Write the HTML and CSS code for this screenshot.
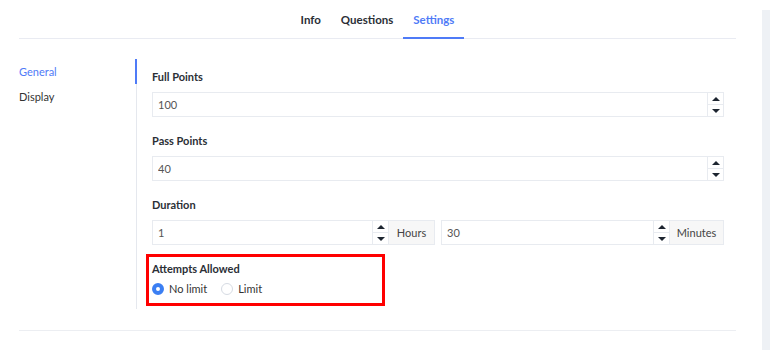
FILE: index.html
```html
<!DOCTYPE html>
<html lang="en">
<head>
  <meta charset="UTF-8" />
  <meta name="viewport" content="width=device-width, initial-scale=1.0"/>
  <title>Quiz Settings</title>
  <link rel="stylesheet" href="styles.css">
</head>
<body>
  <div class="page">
    <div class="main">
      <div class="tabs">
        <a class="tab">Info</a>
        <a class="tab">Questions</a>
        <a class="tab active">Settings</a>
      </div>

      <div class="settings">
        <div class="side-nav">
          <a class="nav-item active">General</a>
          <a class="nav-item">Display</a>
        </div>

        <div class="content">
          <div class="field">
            <label>Full Points</label>
            <div class="input-group">
              <div class="number-input">
                <input type="text" value="100" />
                <div class="spinner">
                  <span class="up"></span>
                  <span class="down"></span>
                </div>
              </div>
            </div>
          </div>

          <div class="field">
            <label>Pass Points</label>
            <div class="input-group">
              <div class="number-input">
                <input type="text" value="40" />
                <div class="spinner">
                  <span class="up"></span>
                  <span class="down"></span>
                </div>
              </div>
            </div>
          </div>

          <div class="field field-duration">
            <label>Duration</label>
            <div class="duration">
              <div class="input-group">
                <div class="number-input">
                  <input type="text" value="1" />
                  <div class="spinner">
                    <span class="up"></span>
                    <span class="down"></span>
                  </div>
                </div>
                <span class="addon addon-hours">Hours</span>
              </div>
              <div class="input-group">
                <div class="number-input">
                  <input type="text" value="30" />
                  <div class="spinner">
                    <span class="up"></span>
                    <span class="down"></span>
                  </div>
                </div>
                <span class="addon addon-minutes">Minutes</span>
              </div>
            </div>
          </div>

          <div class="field highlight">
            <label>Attempts Allowed</label>
            <div class="radios">
              <span class="radio checked">No limit</span>
              <span class="radio">Limit</span>
            </div>
          </div>
        </div>
      </div>

      <div class="footer-line"></div>
    </div>
    <div class="scroll-strip"></div>
  </div>
</body>
</html>
```

FILE: styles.css
```css
body {
  margin: 0;
  font-family: Lato, "Open Sans", sans-serif;
  font-size: 11px;
  color: #333;
  background: white;
}
.page {
  display: flex;
  align-items: flex-start;
}
.main {
  width: 717px;
  padding: 0 0 0 19px;
}
.scroll-strip {
  width: 8px;
  height: 340px;
  margin-top: 10px;
  margin-left: 26px;
  background: #eef1f5;
}

/* tabs */
.tabs {
  display: flex;
  justify-content: center;
  height: 38px;
  border-bottom: 1px solid #e9ebf2;
}
.tab {
  padding: 2px 10px 0;
  line-height: 36px;
  font-size: 11.5px;
  font-weight: 700;
  color: #2b2f36;
  box-sizing: border-box;
}
.tab.active {
  color: #4f7bf7;
  border-bottom: 2px solid #4f7bf7;
  height: 39px;
  line-height: 35px;
  padding-top: 2px;
}

/* settings body */
.settings {
  display: flex;
  margin-top: 20px;
}
.side-nav {
  width: 117px;
  display: flex;
  flex-direction: column;
  padding-top: 5px;
}
.nav-item {
  line-height: 16px;
  margin-bottom: 9px;
  color: #333;
}
.nav-item.active {
  color: #4f7bf7;
}
.content {
  flex: 1;
  border-left: 1px solid #e5e8ee;
  padding: 10px 12px 3px 15px;
  position: relative;
}
.content::before {
  content: "";
  position: absolute;
  left: -2px;
  top: 0;
  width: 2px;
  height: 25px;
  background: #4f7bf7;
}
.field {
  margin-bottom: 16px;
}
.field label {
  display: block;
  font-weight: 700;
  line-height: 16px;
  margin-bottom: 7px;
  color: #2b2f36;
}
.field-duration {
  margin-bottom: 9px;
}

/* inputs */
.input-group {
  display: flex;
  flex: 1;
}
.number-input {
  flex: 1;
  display: flex;
  height: 25px;
  border: 1px solid #e8ebf0;
  box-sizing: border-box;
}
.number-input input {
  flex: 1;
  min-width: 0;
  border: none;
  outline: none;
  padding: 0 5px;
  font-family: inherit;
  font-size: 11px;
  color: #555;
  background: white;
}
.spinner {
  width: 15px;
  display: flex;
  flex-direction: column;
  border-left: 1px solid #e8ebf0;
}
.spinner span {
  flex: 1;
  display: flex;
  align-items: center;
  justify-content: center;
}
.spinner .up {
  border-bottom: 1px solid #e8ebf0;
}
.spinner .up::after {
  content: "";
  border-left: 4px solid transparent;
  border-right: 4px solid transparent;
  border-bottom: 4px solid #1d2530;
}
.spinner .down::after {
  content: "";
  border-left: 4px solid transparent;
  border-right: 4px solid transparent;
  border-top: 4px solid #1d2530;
}
.duration {
  display: flex;
  gap: 6px;
}
.addon {
  display: flex;
  align-items: center;
  justify-content: center;
  height: 25px;
  box-sizing: border-box;
  border: 1px solid #e8ebf0;
  border-left: none;
  background: #f7f7f7;
  color: #444;
}
.addon-hours {
  width: 46px;
}
.addon-minutes {
  width: 54px;
}

/* highlighted group */
.highlight {
  width: 230px;
  margin: 0 0 0 -6px;
  padding: 4px 0 8px 3px;
  border: 3px solid #f00;
}
.highlight label {
  margin-bottom: 6px;
}
.radios {
  display: flex;
  gap: 14px;
}
.radio {
  display: flex;
  align-items: center;
  gap: 5px;
  line-height: 12px;
  color: #333;
}
.radio::before {
  content: "";
  width: 10px;
  height: 10px;
  border-radius: 50%;
  border: 1px solid #d6dbe3;
  background: white;
}
.radio.checked::before {
  width: 4px;
  height: 4px;
  border: 4px solid #3b7ff3;
}

.footer-line {
  margin-top: 21px;
  border-top: 1px solid #eceef2;
}
```
